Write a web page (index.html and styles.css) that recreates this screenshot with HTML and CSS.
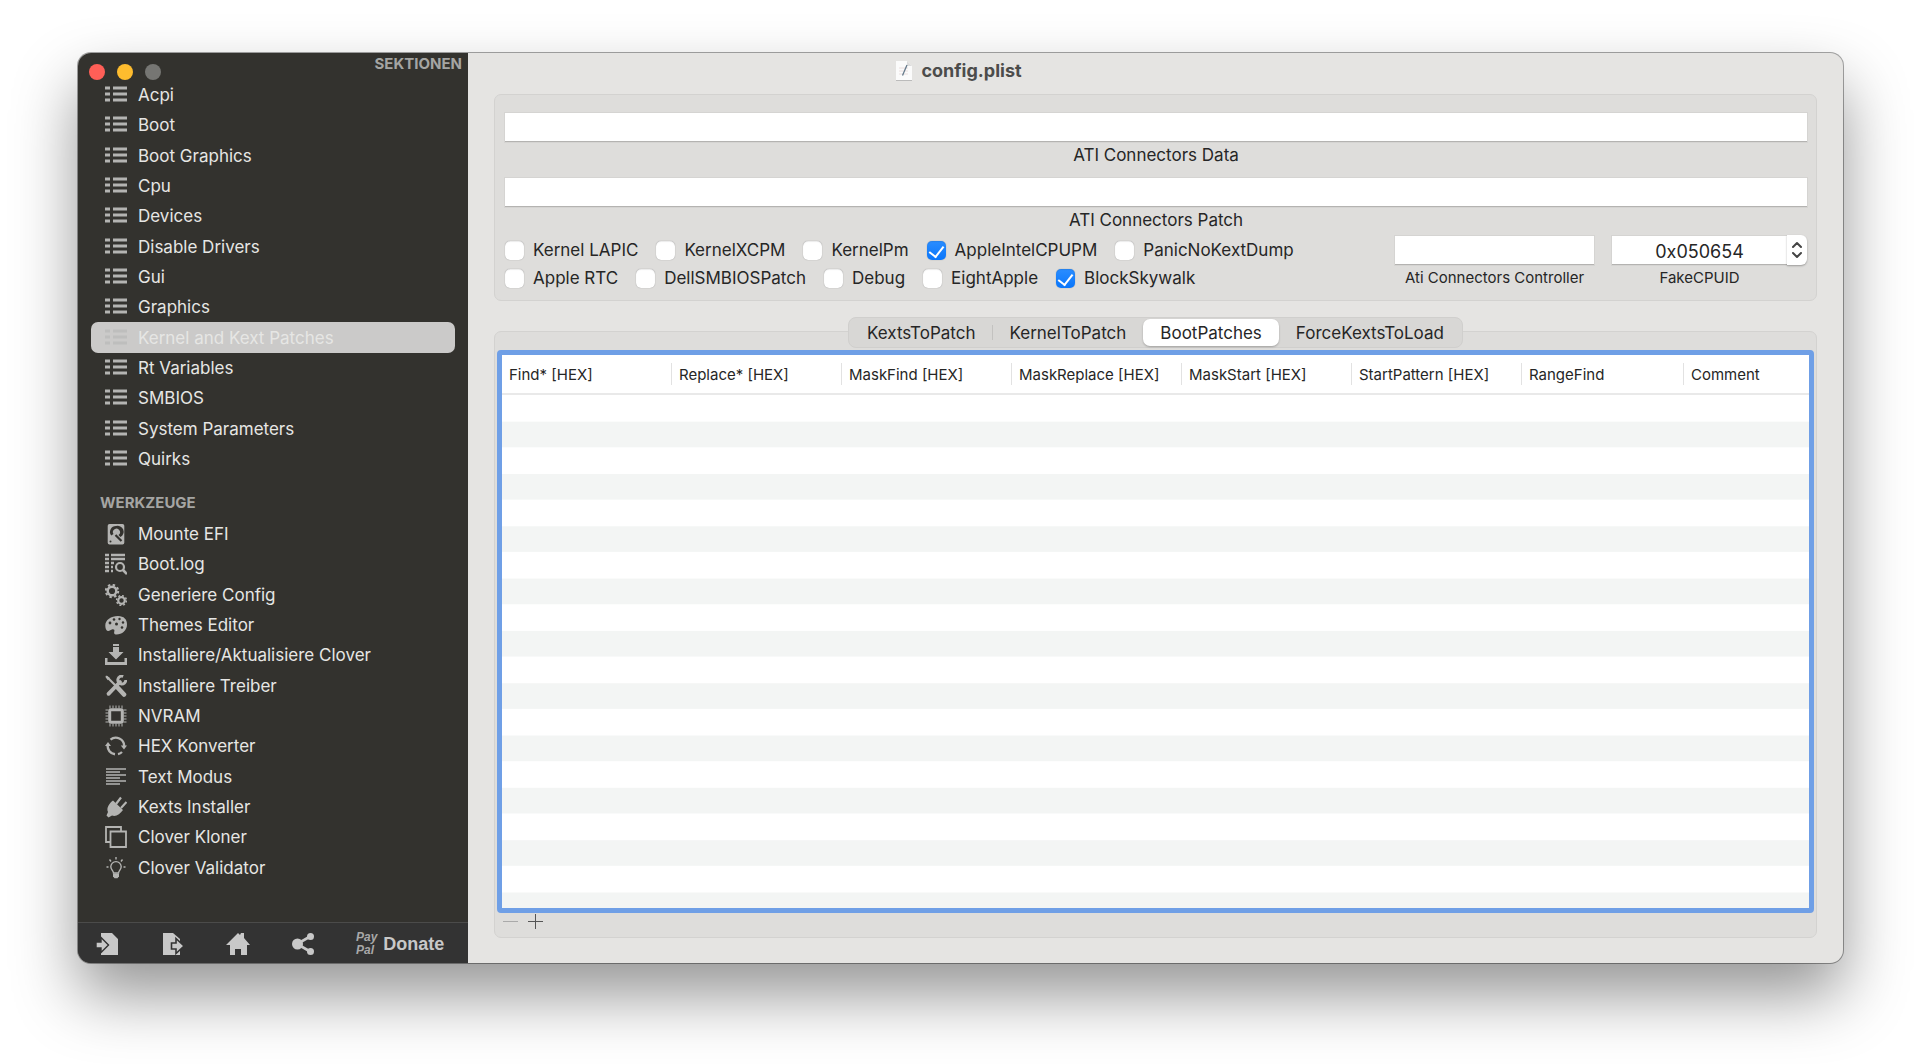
FILE: index.html
```html
<!DOCTYPE html>
<html lang="de">
<head>
  <meta charset="UTF-8">
  <meta name="viewport" content="width=device-width, initial-scale=1.0">
  <title>config.plist</title>
  <link rel="stylesheet" href="styles.css">
</head>
<body>
  <svg class="sprite" aria-hidden="true">
    <symbol id="icon-list" viewBox="0 0 22 22">
      <path d="M0 4h5M0 10h5M0 16h5M8 4h14M8 10h14M8 16h14" stroke="currentColor" stroke-width="3"/>
    </symbol>
    <symbol id="icon-disk" viewBox="0 0 22 22">
      <path fill="currentColor" fill-rule="evenodd" d="M4.500 1h13a1.800 1.800 0 0 1 1.800 1.800v17a1.800 1.800 0 0 1-1.800 1.800h-13a1.800 1.800 0 0 1-1.800-1.800v-17a1.800 1.800 0 0 1 1.800-1.800zM11 3a6 6 0 0 0-4.800 9.600l2.300-1.500a3.500 3.500 0 1 1 5 1l1.900 2A6 6 0 0 0 11 3z"/>
      <circle cx="11" cy="9" r="1.600" fill="currentColor"/>
      <path d="M10.500 12l6 6" stroke="#33322e" stroke-width="2.200"/>
      <circle cx="5.500" cy="18.500" r="1" fill="#33322e"/>
    </symbol>
    <symbol id="icon-log" viewBox="0 0 22 22">
      <path d="M0 2h4M0 6h4M0 10h4M0 14h4M0 18h4M6 2h14M6 6h14M6 10h3M6 14h2M6 18h2" stroke="currentColor" stroke-width="2.400"/>
      <circle cx="15" cy="14" r="4" fill="none" stroke="currentColor" stroke-width="2.200"/>
      <path d="M18 17l4 4" stroke="currentColor" stroke-width="2.600"/>
    </symbol>
    <symbol id="icon-gears" viewBox="0 0 22 22">
      <g fill="none" stroke="currentColor">
        <circle cx="7" cy="7" r="4.300" stroke-width="2.400"/>
        <circle cx="7" cy="7" r="6.200" stroke-width="2" stroke-dasharray="2.430 2.430"/>
        <circle cx="16.500" cy="16.500" r="3.300" stroke-width="2.200"/>
        <circle cx="16.500" cy="16.500" r="4.900" stroke-width="1.500" stroke-dasharray="1.920 1.920"/>
      </g>
    </symbol>
    <symbol id="icon-palette" viewBox="0 0 22 22">
      <path fill="currentColor" d="M.3 11.500C.3 6 6 2 13 2c6 0 9 3.500 9 8.500 0 6-5 10-10.500 10-2.500 0-2.600-1.500-2.200-3 .5-1.800-.3-2.500-1.800-2.300-2 .3-3 2.300-4.800 1.800C1 16.500.3 14 .3 11.500z"/>
      <g fill="#33322e"><circle cx="5" cy="9" r="1.400"/><circle cx="9" cy="5.500" r="1.300"/><circle cx="14.500" cy="5" r="1.200"/><circle cx="18" cy="8.500" r="1.200"/><circle cx="17" cy="13.500" r="1.300"/><circle cx="11.500" cy="10" r="1.500"/></g>
    </symbol>
    <symbol id="icon-download" viewBox="0 0 22 22">
      <path fill="currentColor" d="M8 0h6v2H8zM8 3h6v5h4.500L11 15.500 3.500 8H8zM0 14h2.500v4h17v-4H22v7H0z"/>
    </symbol>
    <symbol id="icon-tools" viewBox="0 0 22 22">
      <path d="M2 2l8 8" stroke="currentColor" stroke-width="2.200" stroke-linecap="round"/>
      <path d="M1 .5l4 2.500-2.200 2.300L.5 2z" fill="currentColor"/>
      <path d="M13 13l6 6.500" stroke="currentColor" stroke-width="4.600" stroke-linecap="round"/>
      <path d="M15 7L3.500 18.800" stroke="currentColor" stroke-width="3.800" stroke-linecap="round"/>
      <path d="M18.200 1.300a4 4 0 1 0 2.600 3.800" stroke="currentColor" stroke-width="2.900" fill="none"/>
    </symbol>
    <symbol id="icon-chip" viewBox="0 0 22 22">
      <rect x="4.700" y="4.700" width="12.600" height="12.600" rx="1.500" fill="none" stroke="currentColor" stroke-width="3"/>
      <path d="M5 .5v3M8 .5v3M11 .5v3M14 .5v3M17 .5v3M5 18.500v3M8 18.500v3M11 18.500v3M14 18.500v3M17 18.500v3M.5 5h3M.5 8h3M.5 11h3M.5 14h3M.5 17h3M18.500 5h3M18.500 8h3M18.500 11h3M18.500 14h3M18.500 17h3" stroke="currentColor"/>
    </symbol>
    <symbol id="icon-cycle" viewBox="0 0 22 22">
      <path d="M5.500 4.600A8.400 8.400 0 0 1 19.200 11M17 17a8.400 8.400 0 0 1-4 2.100M10 19.300A8.400 8.400 0 0 1 2.700 10" fill="none" stroke="currentColor" stroke-width="2.400"/>
      <path d="M15.800 10.500H22l-3 4zM0 11l3-4 3 4z" fill="currentColor"/>
    </symbol>
    <symbol id="icon-text" viewBox="0 0 22 22">
      <path d="M1 3h20M1 6h14M1 9h20M1 12h14M1 15h20M1 18h14" stroke="currentColor" stroke-width="1.500"/>
    </symbol>
    <symbol id="icon-plug" viewBox="0 0 22 22">
      <path fill="currentColor" d="M8 4.500l10 9.500c-3 4-7 7-11 5.500L3.500 21.500l-2-2L3 16C1 12 4.500 7 8 4.500z"/>
      <path d="M11 8l5-6.500M16 12l5.500-6" stroke="currentColor" stroke-width="2.200"/>
    </symbol>
    <symbol id="icon-clone" viewBox="0 0 22 22">
      <path d="M5 16H1V1h15v4M5.500 5.500H21V21H5.500z" fill="none" stroke="currentColor" stroke-width="1.800"/>
    </symbol>
    <symbol id="icon-bulb" viewBox="0 0 22 22">
      <path d="M8.500 16c0-2-2.700-3.500-2.700-6.200a5.200 5.200 0 0 1 10.400 0c0 2.700-2.700 4.200-2.700 6.200zM11 0v2.500M4.500 2.500l1.500 2M17.500 2.500l-1.500 2M1.500 10h2M18.500 10h2" fill="none" stroke="currentColor" stroke-width="1.400"/>
      <path d="M8 16.500h6v2.800l-1.500 2h-3L8 19.300z" fill="currentColor"/>
    </symbol>
  </svg>

  <div class="window">
    <aside class="sidebar">
      <header class="sidebar-top">
        <div class="lights">
          <button type="button" class="light close" aria-label="Schließen"></button>
          <button type="button" class="light minimize" aria-label="Minimieren"></button>
          <button type="button" class="light zoom" aria-label="Zoomen"></button>
        </div>
        <h2 class="sidebar-title">SEKTIONEN</h2>
      </header>

      <nav class="sidebar-nav">
        <ul class="menu menu-sections">
          <li><a href="#"><svg class="icon"><use href="#icon-list"/></svg>Acpi</a></li>
          <li><a href="#"><svg class="icon"><use href="#icon-list"/></svg>Boot</a></li>
          <li><a href="#"><svg class="icon"><use href="#icon-list"/></svg>Boot Graphics</a></li>
          <li><a href="#"><svg class="icon"><use href="#icon-list"/></svg>Cpu</a></li>
          <li><a href="#"><svg class="icon"><use href="#icon-list"/></svg>Devices</a></li>
          <li><a href="#"><svg class="icon"><use href="#icon-list"/></svg>Disable Drivers</a></li>
          <li><a href="#"><svg class="icon"><use href="#icon-list"/></svg>Gui</a></li>
          <li><a href="#"><svg class="icon"><use href="#icon-list"/></svg>Graphics</a></li>
          <li><a href="#" class="selected" aria-current="page"><svg class="icon"><use href="#icon-list"/></svg>Kernel and Kext Patches</a></li>
          <li><a href="#"><svg class="icon"><use href="#icon-list"/></svg>Rt Variables</a></li>
          <li><a href="#"><svg class="icon"><use href="#icon-list"/></svg>SMBIOS</a></li>
          <li><a href="#"><svg class="icon"><use href="#icon-list"/></svg>System Parameters</a></li>
          <li><a href="#"><svg class="icon"><use href="#icon-list"/></svg>Quirks</a></li>
        </ul>

        <h2 class="sidebar-title tools-title">WERKZEUGE</h2>
        <ul class="menu menu-tools">
          <li><a href="#"><svg class="icon"><use href="#icon-disk"/></svg>Mounte EFI</a></li>
          <li><a href="#"><svg class="icon"><use href="#icon-log"/></svg>Boot.log</a></li>
          <li><a href="#"><svg class="icon"><use href="#icon-gears"/></svg>Generiere Config</a></li>
          <li><a href="#"><svg class="icon"><use href="#icon-palette"/></svg>Themes Editor</a></li>
          <li><a href="#"><svg class="icon"><use href="#icon-download"/></svg>Installiere/Aktualisiere Clover</a></li>
          <li><a href="#"><svg class="icon"><use href="#icon-tools"/></svg>Installiere Treiber</a></li>
          <li><a href="#"><svg class="icon"><use href="#icon-chip"/></svg>NVRAM</a></li>
          <li><a href="#"><svg class="icon"><use href="#icon-cycle"/></svg>HEX Konverter</a></li>
          <li><a href="#"><svg class="icon"><use href="#icon-text"/></svg>Text Modus</a></li>
          <li><a href="#"><svg class="icon"><use href="#icon-plug"/></svg>Kexts Installer</a></li>
          <li><a href="#"><svg class="icon"><use href="#icon-clone"/></svg>Clover Kloner</a></li>
          <li><a href="#"><svg class="icon"><use href="#icon-bulb"/></svg>Clover Validator</a></li>
        </ul>
      </nav>

      <footer class="sidebar-footer">
        <button type="button" aria-label="Importieren">
          <svg viewBox="0 0 24 24"><path fill="currentColor" d="M5 1h11l6 6v16H5v-3l8-7-8-7z"/><path fill="currentColor" stroke="#333" stroke-width="1.400" d="M0 10h5V5.500l7.500 7.500L5 20.500V16H0z"/></svg>
        </button>
        <button type="button" aria-label="Exportieren">
          <svg viewBox="0 0 24 24"><path fill="currentColor" d="M2 1h10l7 6v16H2z"/><path fill="currentColor" stroke="#333" stroke-width="1.600" d="M10.500 11H15V6.500l8 7.500-8 7.500V17h-4.500z"/></svg>
        </button>
        <button type="button" aria-label="Startseite">
          <svg viewBox="0 0 24 24"><path fill="currentColor" d="M12 1l2 2 1-2h3v5l6 7h-3v10h-6v-6H9v6H4V13H0z"/></svg>
        </button>
        <button type="button" aria-label="Teilen">
          <svg viewBox="0 0 24 24"><path d="M20 4L6 12l14 8" fill="none" stroke="currentColor" stroke-width="2.600"/><g fill="currentColor"><circle cx="6.500" cy="12" r="5.500"/><circle cx="19.500" cy="4.500" r="3.500"/><circle cx="19.500" cy="19.500" r="3.500"/></g></svg>
        </button>
        <button type="button" class="donate">
          <span class="paypal"><span>Pay</span><span>Pal</span></span>
          Donate
        </button>
      </footer>
    </aside>

    <main class="content">
      <header class="titlebar">
        <svg class="doc-icon" viewBox="0 0 18 20"><path d="M1 0h11l5 5v14H1z" fill="#fbfbfb"/><path d="M1 19.500h16" stroke="#bbb"/><path d="M12 0v5h5z" fill="#dcdcdc"/><path d="M4 7h9M4 10h9M4 13h9" stroke="#eadede"/><path d="M12 4L7.500 14.500" stroke="#667b8c" stroke-width="1.300"/></svg>
        <h1>config.plist</h1>
      </header>

      <section class="group">
        <div class="field">
          <input type="text" id="ati-data">
          <label for="ati-data">ATI Connectors Data</label>
        </div>
        <div class="field">
          <input type="text" id="ati-patch">
          <label for="ati-patch">ATI Connectors Patch</label>
        </div>

        <div class="options">
          <div class="checks">
            <div class="check-row">
              <label><input type="checkbox">Kernel LAPIC</label>
              <label><input type="checkbox">KernelXCPM</label>
              <label><input type="checkbox">KernelPm</label>
              <label><input type="checkbox" checked>AppleIntelCPUPM</label>
              <label><input type="checkbox">PanicNoKextDump</label>
            </div>
            <div class="check-row">
              <label><input type="checkbox">Apple RTC</label>
              <label><input type="checkbox">DellSMBIOSPatch</label>
              <label><input type="checkbox">Debug</label>
              <label><input type="checkbox">EightApple</label>
              <label><input type="checkbox" checked>BlockSkywalk</label>
            </div>
          </div>
          <div class="small-field controller">
            <input type="text" id="ati-controller">
            <label for="ati-controller">Ati Connectors Controller</label>
          </div>
          <div class="small-field cpuid">
            <div class="combo">
              <input type="text" id="fake-cpuid" value="0x050654">
              <button type="button" aria-label="Auswählen"><svg viewBox="0 0 12 18"><path d="M2 6l4-4 4 4M2 12l4 4 4-4" fill="none" stroke="#444" stroke-width="2" stroke-linecap="round" stroke-linejoin="round"/></svg></button>
            </div>
            <label for="fake-cpuid">FakeCPUID</label>
          </div>
        </div>
      </section>

      <section class="group patches">
        <div class="tabs" role="tablist">
          <button type="button" role="tab">KextsToPatch</button>
          <button type="button" role="tab">KernelToPatch</button>
          <button type="button" role="tab" class="active" aria-selected="true">BootPatches</button>
          <button type="button" role="tab">ForceKextsToLoad</button>
        </div>

        <div class="table-box">
          <table>
            <thead>
              <tr>
                <th class="col-hex">Find* [HEX]</th>
                <th class="col-hex">Replace* [HEX]</th>
                <th class="col-hex">MaskFind [HEX]</th>
                <th class="col-hex">MaskReplace [HEX]</th>
                <th class="col-hex">MaskStart [HEX]</th>
                <th class="col-hex">StartPattern [HEX]</th>
                <th class="col-range">RangeFind</th>
                <th>Comment</th>
              </tr>
            </thead>
            <tbody></tbody>
          </table>
          <div class="stripes"></div>
        </div>

        <div class="table-actions">
          <button type="button" aria-label="Entfernen" disabled><svg viewBox="0 0 15 15"><path d="M0 7.500h15" stroke="currentColor"/></svg></button>
          <button type="button" aria-label="Hinzufügen"><svg viewBox="0 0 15 15"><path d="M0 7.500h15M7.500 0v15" stroke="currentColor"/></svg></button>
        </div>
      </section>
    </main>
  </div>
</body>
</html>
```

FILE: styles.css
```css
* {
  box-sizing: border-box;
}
body {
  margin: 0;
  min-height: 100vh;
  padding: 53px 77px 101px 78px;
  display: flex;
  background: #fff;
  font-family: Inter, "Liberation Sans", sans-serif;
  font-size: 17px;
  color: #262626;
}
button,
input {
  font: inherit;
  color: inherit;
}
button {
  padding: 0;
  border: none;
  background: none;
}
.sprite {
  display: none;
}
.window {
  flex: 1;
  display: flex;
  border-radius: 13px;
  overflow: hidden;
  background: #e5e4e2;
  box-shadow: 0 0 0 1px rgba(0,0,0,0.35), 0 32px 64px rgba(0,0,0,0.42);
}

/* Sidebar */
.sidebar {
  width: 390px;
  flex-shrink: 0;
  display: flex;
  flex-direction: column;
  background: #33322e;
  color: #e6e6e4;
}
.sidebar-top {
  height: 27px;
  display: flex;
  justify-content: space-between;
  padding: 0 6px 0 11px;
}
.lights {
  display: flex;
  gap: 12px;
  align-self: flex-end;
}
.light {
  width: 16px;
  height: 16px;
  border-radius: 50%;
}
.close {
  background: #ff5f57;
}
.minimize {
  background: #febc2e;
}
.zoom {
  background: #767673;
}
.sidebar-title {
  margin: 0;
  font-size: 15px;
  line-height: 22px;
  font-weight: 700;
  color: #a5a5a3;
}
.sidebar-nav {
  flex: 1;
}
.tools-title {
  padding: 18px 22px 5px;
}
.menu {
  list-style: none;
  margin: 0;
  padding: 0 13px;
  display: grid;
  grid-auto-rows: 1fr;
}
.menu-sections {
  min-height: 394px;
}
.menu-tools {
  min-height: 364px;
}
.menu a {
  height: 100%;
  display: flex;
  align-items: center;
  gap: 11px;
  padding: 0 14px;
  border-radius: 7px;
  color: inherit;
  text-decoration: none;
}
.menu a.selected {
  background: #cbcac9;
}
.icon {
  width: 22px;
  height: 22px;
  color: #b4b4b2;
}
.selected .icon {
  color: #bebebd;
}
.sidebar-footer {
  height: 41px;
  display: flex;
  align-items: center;
  gap: 41px;
  padding: 2px 18px 0;
  border-top: 1px solid #4b4b4a;
  background: #333;
  color: #c8c8c8;
}
.sidebar-footer svg {
  display: block;
  width: 24px;
  height: 24px;
}
.donate {
  display: flex;
  align-items: center;
  gap: 6px;
  font-family: "Liberation Sans", sans-serif;
  font-size: 18px;
  font-weight: 700;
}
.paypal {
  display: flex;
  flex-direction: column;
  font-size: 12px;
  line-height: 13px;
  font-style: italic;
  text-align: left;
  color: #a8a8a8;
}

/* Content */
.content {
  flex: 1;
  min-width: 0;
  display: flex;
  flex-direction: column;
  padding: 0 26px 25px;
}
.titlebar {
  height: 41px;
  display: flex;
  align-items: center;
  justify-content: center;
  gap: 8px;
  padding: 0 394px 5px 0;
}
.titlebar h1 {
  margin: 0;
  font-size: 18px;
  line-height: 36px;
  font-weight: 700;
  color: #4c4c4b;
}
.doc-icon {
  width: 18px;
  height: 20px;
}
.group {
  padding: 18px 9px 8px 10px;
  border: 1px solid #d3d2d0;
  border-radius: 7px;
  background: #dedddb;
}
.field {
  display: flex;
  flex-direction: column;
  text-align: center;
  margin-bottom: 9px;
}
.field + .field {
  margin-bottom: 2px;
}
.field label {
  line-height: 27px;
}
input[type="text"] {
  width: 100%;
  height: 29px;
  padding: 0 8px;
  border: none;
  border-bottom: 1px solid #b4b3b1;
  border-radius: 0;
  background: #fff;
  box-shadow: 0 0 0 1px rgba(0,0,0,0.04);
}
.options {
  display: flex;
  align-items: flex-start;
}
.checks {
  flex: 1;
}
.check-row {
  display: flex;
  gap: 18px;
  height: 28px;
}
.check-row label {
  display: flex;
  align-items: center;
  gap: 9px;
}
input[type="checkbox"] {
  appearance: none;
  width: 19px;
  height: 19px;
  margin: 0;
  border-radius: 5px;
  background: #fff;
  box-shadow: 0 0 1px rgba(0,0,0,0.4), inset 0 1px 1px rgba(0,0,0,0.08);
}
input[type="checkbox"]:checked {
  background: linear-gradient(#2a8dff, #0a76fb);
  display: grid;
  justify-content: center;
}
input[type="checkbox"]:checked::before {
  content: "";
  width: 7px;
  height: 12px;
  margin-top: 2px;
  border: solid #fff;
  border-width: 0 2px 2px 0;
  transform: rotate(38deg);
}
.small-field {
  display: flex;
  flex-direction: column;
  text-align: center;
  font-size: 15px;
}
.small-field label {
  line-height: 26px;
}
.controller {
  width: 199px;
  margin-right: 18px;
}
.cpuid {
  width: 195px;
}
.combo {
  display: flex;
}
.combo input[type="text"] {
  flex: 1;
  min-width: 0;
  padding: 2px 0 0;
  font-size: 18px;
  text-align: center;
}
.combo button {
  width: 20px;
  height: 30px;
  margin: -1px 0 0;
  border-radius: 0 6px 6px 0;
  background: #fff;
  box-shadow: 0 1px 2px rgba(0,0,0,0.3);
}
.combo svg {
  display: block;
  width: 12px;
  height: 18px;
  margin: 0 auto;
}
.cpuid label {
  padding-right: 20px;
}
.patches {
  flex: 1;
  display: flex;
  flex-direction: column;
  margin-top: 30px;
  padding: 0 2px 8px;
}
.tabs {
  align-self: center;
  display: flex;
  height: 31px;
  margin: -15px 0 2px;
  padding: 1px;
  border: 1px solid #d0cfcd;
  border-radius: 8px;
  background: #d8d7d5;
}
.tabs button {
  position: relative;
  padding: 0 17px;
  border-radius: 7px;
}
.tabs button:first-child::after {
  content: "";
  position: absolute;
  top: 6px;
  right: 0;
  width: 1px;
  height: 15px;
  background: #c3c2c0;
}
.tabs button.active {
  background: #fff;
  box-shadow: 0 1px 2px rgba(0,0,0,0.25);
}
.table-box {
  flex: 1;
  display: flex;
  flex-direction: column;
  border: 5px solid #6f9fe6;
  border-radius: 4px;
  background: #fff;
}
table {
  width: 100%;
  table-layout: fixed;
  border-collapse: collapse;
  font-size: 15px;
}
thead tr {
  height: 39px;
  border-bottom: 2px solid #e9e9e9;
}
th {
  padding: 0 0 0 7px;
  font-weight: 400;
  text-align: left;
  white-space: nowrap;
  background: linear-gradient(#e2e2e2, #e2e2e2) right center / 1px 22px no-repeat;
}
th:last-child {
  background: none;
}
.col-hex {
  width: 170px;
}
.col-range {
  width: 162px;
}
.stripes {
  flex: 1;
  background: linear-gradient(#fff 50%, #f3f5f4 50%) 0 0 / 100% 10.2%;
}
.table-actions {
  display: flex;
  gap: 10px;
  padding: 1px 6px 0;
  color: #555;
}
.table-actions button:disabled {
  color: #aaa;
}
.table-actions svg {
  display: block;
  width: 15px;
  height: 15px;
}
```
